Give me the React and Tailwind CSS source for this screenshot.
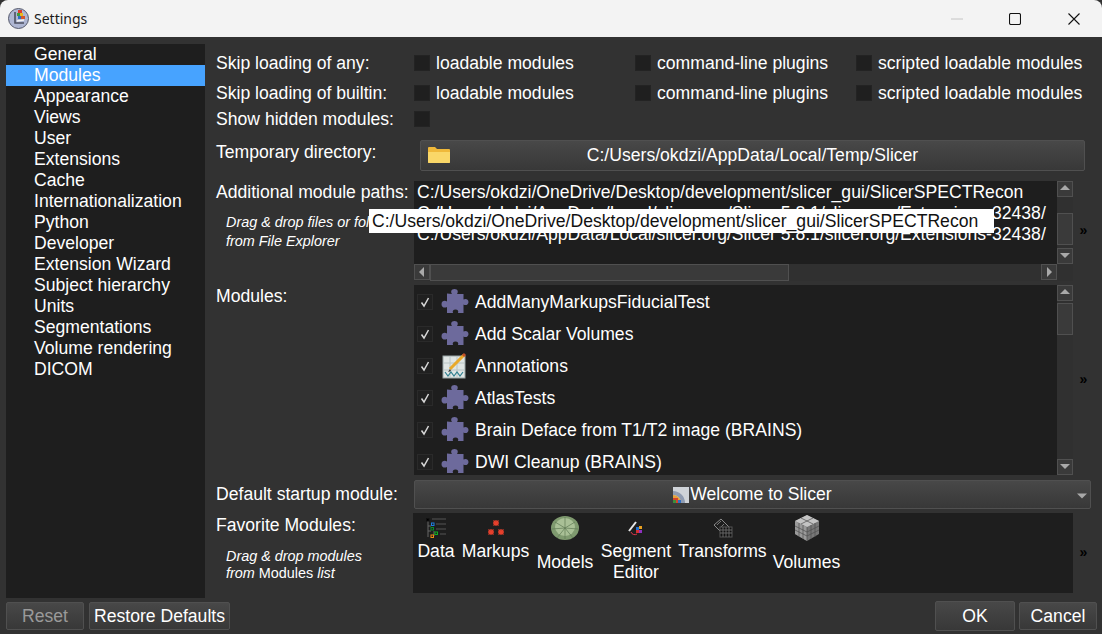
const categories = [
  "General",
  "Modules",
  "Appearance",
  "Views",
  "User",
  "Extensions",
  "Cache",
  "Internationalization",
  "Python",
  "Developer",
  "Extension Wizard",
  "Subject hierarchy",
  "Units",
  "Segmentations",
  "Volume rendering",
  "DICOM",
];

const modules = [
  { name: "AddManyMarkupsFiducialTest" },
  { name: "Add Scalar Volumes" },
  { name: "Annotations", icon: "annotations" },
  { name: "AtlasTests" },
  { name: "Brain Deface from T1/T2 image (BRAINS)" },
  { name: "DWI Cleanup (BRAINS)" },
];

function SlicerLogo() {
  return (
    <svg width="21" height="21" viewBox="0 0 21 21">
      <circle cx="10.5" cy="10.5" r="10" fill="#aeb6d2" stroke="#55596b" strokeWidth="1" />
      <path d="M7 4v11h9" fill="none" stroke="#4d5060" strokeWidth="1.6" />
      <path d="M9 13l7-1" stroke="#f2f2f2" strokeWidth="1.5" />
      <rect x="10" y="2" width="4" height="3" fill="#e03b2a" />
      <rect x="9" y="5" width="3" height="3" fill="#3f9a3c" />
      <rect x="12" y="5" width="3" height="3" fill="#e8b91f" />
      <rect x="10" y="8" width="3" height="3" fill="#2f6fc4" />
      <rect x="13" y="8" width="4" height="3" fill="#d6562b" />
    </svg>
  );
}

function Check() {
  return (
    <div className="flex h-4 w-4 shrink-0 items-center justify-center border border-[#2a2a2a] bg-[#202020]">
      <svg width="12" height="12" viewBox="0 0 12 12">
        <path d="M2.5 6.5l2.5 3.5 4.5-8" fill="none" stroke="#d8d8d8" strokeWidth="1.5" />
      </svg>
    </div>
  );
}

function EmptyBox() {
  return <div className="h-4 w-4 shrink-0 border border-[#232323] bg-[#1f1f1f]" />;
}

function PuzzleIcon() {
  return (
    <svg width="30" height="30" viewBox="0 0 30 30">
      <path
        d="M12 7c-1.5-2-1-5 2.5-5s4 3 2.500 5h6.500v5.500c2-1.200 5-.5 5 2.500s-3 3.800-5 2.500v8.500h-5.500c.8-2-.2-3.500-2.500-3.500s-3.300 1.500-2.500 3.500h-6v-6c-2 1.200-5.500.8-5.500-2.800s3.500-4 5.500-2.800v-7.900z"
        fill="#6d6a9c"
      />
    </svg>
  );
}

function AnnotationsIcon() {
  return (
    <svg width="26" height="28" viewBox="0 0 26 28">
      <rect x="1" y="4" width="22" height="22" fill="#dfe5e4" stroke="#9aa5a5" />
      <path d="M1 11h22M1 18h22M8 4v22M15 4v22" stroke="#b8c4c4" strokeWidth="1" />
      <path d="M3 20l3 4 3-4 3 4 3-4 3 4 3-4" fill="none" stroke="#2f7f8f" strokeWidth="1.2" />
      <path d="M8 17L22 3" stroke="#e8a92a" strokeWidth="3" />
      <path d="M21 4l2-2" stroke="#c2502a" strokeWidth="3" />
      <path d="M8 17l-2 3 3-1z" fill="#333" />
    </svg>
  );
}

function FolderIcon() {
  return (
    <svg width="24" height="19" viewBox="0 0 24 19">
      <path d="M1 3a1 1 0 011-1h6l2 2h12a1 1 0 011 1v12a1 1 0 01-1 1H2a1 1 0 01-1-1z" fill="#f0b93a" />
      <path d="M1 7h22v10a1 1 0 01-1 1H2a1 1 0 01-1-1z" fill="#fad768" />
    </svg>
  );
}

function WelcomeIcon() {
  return (
    <svg width="16" height="16" viewBox="0 0 16 16">
      <rect width="16" height="16" fill="#cfd3d8" />
      <path d="M0 4a12 12 0 0112 12H8a8 8 0 00-8-8z" fill="#8f9bb0" />
      <path d="M0 8a8 8 0 018 8H5a5 5 0 00-5-5z" fill="#e8a23a" />
      <rect x="0" y="11" width="5" height="5" fill="#d6452c" />
      <rect x="0" y="13" width="3" height="3" fill="#3b8f3b" />
      <rect x="5" y="13" width="3" height="3" fill="#2f6fc4" />
    </svg>
  );
}

function DataIcon() {
  return (
    <svg width="20" height="20" viewBox="0 0 20 20" fill="none">
      <path d="M2 3v16M2 8h3M2 13h3M8 13v5" stroke="#666" />
      <path d="M6 1h14M10 6h10M10 11h10M14 16h6" stroke="#555" />
      <rect x="0.500" y="0.500" width="2.500" height="2.500" stroke="#111" strokeWidth="1" fill="#000" />
      <rect x="5.500" y="5" width="2.500" height="2.500" stroke="#1e7fe0" />
      <rect x="5" y="9.500" width="2.500" height="2.500" stroke="#0a8a2a" />
      <rect x="9" y="14" width="2.500" height="2.500" stroke="#0fb01f" />
      <rect x="5" y="17" width="2.500" height="2.500" stroke="#f08a10" />
    </svg>
  );
}

function Asterisk({ x, y }) {
  return (
    <g stroke="#e8402c" strokeWidth="1.300" transform={`translate(${x} ${y})`}>
      <path d="M-3 0h6M0-3v6M-2.500-2.500l5 5M2.500-2.500l-5 5" />
    </g>
  );
}

function MarkupsIcon() {
  return (
    <svg width="20" height="18" viewBox="0 0 20 18">
      <Asterisk x={10} y={4} />
      <Asterisk x={5} y={13} />
      <Asterisk x={15} y={13} />
    </svg>
  );
}

function ModelsIcon() {
  return (
    <svg width="28" height="24" viewBox="0 0 28 24">
      <ellipse cx="14" cy="12" rx="14" ry="12" fill="#7f9a6f" />
      <ellipse cx="14" cy="11" rx="10" ry="9" fill="#a9c096" />
      <path d="M4 6l10 6 10-6M14 1v22M1 13l13-1 13 1M6 22l8-10 8 10" fill="none" stroke="#5f7a55" strokeWidth=".7" />
    </svg>
  );
}

function SegmentIcon() {
  return (
    <svg width="16" height="20" viewBox="0 0 16 20">
      <path d="M1 13L8 4" stroke="#e8e8e8" strokeWidth="2" />
      <path d="M3 14a4 4 0 006 2" fill="none" stroke="#e0344a" strokeWidth="1" />
      <rect x="8" y="9" width="3" height="3" fill="#1f6fd0" />
      <rect x="11" y="8" width="3" height="3" fill="#e8a020" />
      <rect x="8" y="12" width="3" height="3" fill="#d23030" />
      <rect x="11" y="12" width="3" height="3" fill="#9030c0" />
    </svg>
  );
}

function TransformsIcon() {
  return (
    <svg width="20" height="20" viewBox="0 0 20 20">
      <path d="M1 7l7-6 8 8-7 6z" fill="none" stroke="#8a8a8a" />
      <path d="M4 7l4-4M7 10l4-4" stroke="#777" />
      <rect x="7" y="9" width="12" height="10" fill="#111" stroke="#555" />
      <path d="M7 12h12M7 15h12M10 9v10M13 9v10M16 9v10" stroke="#666" />
    </svg>
  );
}

function VolumesIcon() {
  return (
    <svg width="28" height="28" viewBox="0 0 28 28">
      <path d="M14 1l12 6v13l-12 7-12-7V7z" fill="#777" />
      <path d="M14 1l12 6-12 6L2 7z" fill="#c4c4c4" />
      <path d="M2 7l12 6v14L2 20z" fill="#9a9a9a" />
      <path d="M14 13v14M8 4l12 6M20 4L8 10M2 12l12 6 12-6M2 16l12 6 12-6M6 9v14M10 11v14M18 11v14M22 9v14" stroke="#4d4d4d" strokeWidth=".7" fill="none" />
    </svg>
  );
}

function Arrow({ dir }) {
  const paths = {
    up: "M1 7l5-5 5 5z",
    down: "M1 3l5 5 5-5z",
    left: "M8 1L3 6l5 5z",
    right: "M4 1l5 5-5 5z",
  };
  return (
    <svg width="12" height="12" viewBox="0 0 12 12">
      <path d={paths[dir]} fill="#a9a9a9" />
    </svg>
  );
}

function ScrollButton({ dir }) {
  return (
    <div className="flex h-4 w-4 shrink-0 items-center justify-center border border-[#505050] bg-[#3a3a3a]">
      <Arrow dir={dir} />
    </div>
  );
}

function VScrollbar({ thumbTop, thumbHeight }) {
  return (
    <div className="flex w-4 shrink-0 flex-col justify-between bg-[#303030]">
      <ScrollButton dir="up" />
      <div className="flex-1 pt-[var(--t)]" style={{ "--t": `${thumbTop}px` }}>
        <div className="border border-[#505050] bg-[#3a3a3a]" style={{ height: thumbHeight }} />
      </div>
      <ScrollButton dir="down" />
    </div>
  );
}

function Chevron() {
  return <div className="flex w-[20px] shrink-0 items-center justify-center pb-[2px] pl-[1px] text-[14px] font-bold leading-none text-black">»</div>;
}

function GradientButton({ className, children }) {
  return (
    <div className={`flex items-center justify-center rounded-[2px] border border-[#505050] bg-linear-to-b from-[#484848] to-[#383838] ${className}`}>
      {children}
    </div>
  );
}

function SkipRow({ label, className }) {
  return (
    <div className={`flex items-center ${className}`}>
      <div className="w-[198px]">{label}</div>
      {["loadable modules", "command-line plugins", "scripted loadable modules"].map((text) => (
        <div key={text} className="flex w-[221px] items-center gap-[6px] whitespace-nowrap">
          <EmptyBox />
          {text}
        </div>
      ))}
    </div>
  );
}

function FavoriteItem({ icon, width, labelClass, children }) {
  return (
    <div className="flex flex-col items-center text-center leading-[21px]" style={{ width }}>
      <div className="flex h-[24px] items-center justify-center">{icon}</div>
      <div className={labelClass}>{children}</div>
    </div>
  );
}

export default function App() {
  return (
    <div className="relative h-[634px] w-[1102px] overflow-hidden bg-[#323232] font-['Liberation_Sans',Arial,sans-serif] text-[17.6px] text-white">
      <div className="flex h-[37px] items-center rounded-t-[8px] bg-[#f3f3f3] pl-[8px] text-black">
        <SlicerLogo />
        <span className="ml-[5px] font-['Noto_Sans',sans-serif] text-[14px] text-[#1a1a1a]">Settings</span>
        <div className="ml-auto flex items-center">
          <svg width="12" height="12" viewBox="0 0 12 12" className="mr-[46px]">
            <path d="M0 6h12" stroke="#c4c4c4" />
          </svg>
          <svg width="12" height="12" viewBox="0 0 12 12" className="mr-[47px]">
            <rect x=".5" y=".5" width="11" height="11" rx="1.500" fill="none" stroke="#111" strokeWidth="1.100" />
          </svg>
          <svg width="12" height="12" viewBox="0 0 12 12" className="mr-[22px]">
            <path d="M.5.5l11 11M11.500.5l-11 11" stroke="#111" strokeWidth="1.100" />
          </svg>
        </div>
      </div>

      <div className="flex h-[561px]">
        <div className="ml-[6px] mt-[7px] h-[554px] w-[199px] shrink-0 bg-[#1e1e1e]">
          {categories.map((name) => (
            <div
              key={name}
              className={`h-[21px] pl-[28px] leading-[21px] ${name === "Modules" ? "bg-[#47a3ff]" : ""}`}
            >
              {name}
            </div>
          ))}
        </div>

        <div className="flex min-w-0 flex-1 flex-col pl-[11px] pt-[11px]">
          <SkipRow label="Skip loading of any:" className="h-[30px]" />
          <SkipRow label="Skip loading of builtin:" className="h-[30px]" />
          <div className="flex h-[22px] items-center">
            <div className="w-[198px]">Show hidden modules:</div>
            <EmptyBox />
          </div>

          <div className="mt-[10px] flex h-[31px]">
            <div className="w-[198px] leading-[24px]">Temporary directory:</div>
            <GradientButton className="relative ml-[6px] w-[665px]">
              <span className="absolute left-[6px] top-[4px]">
                <FolderIcon />
              </span>
              C:/Users/okdzi/AppData/Local/Temp/Slicer
            </GradientButton>
          </div>

          <div className="mt-[10px] flex h-[100px]">
            <div className="w-[198px] shrink-0">
              <div className="leading-[22px]">Additional module paths:</div>
              <div className="mt-[10px] whitespace-nowrap pl-[10px] text-[14.4px] italic leading-[19px]">
                Drag &amp; drop files or folders
                <br />
                from File Explorer
              </div>
            </div>
            <div className="flex w-[659px] shrink-0 flex-col bg-[#1e1e1e]">
              <div className="flex min-h-0 flex-1">
                <div className="min-w-0 flex-1 overflow-hidden whitespace-nowrap pl-[3px] pt-[1px] leading-[21px]">
                  <div>C:/Users/okdzi/OneDrive/Desktop/development/slicer_gui/SlicerSPECTRecon</div>
                  <div>C:/Users/okdzi/AppData/Local/slicer.org/Slicer 5.8.1/slicer.org/Extensions-32438/</div>
                  <div>C:/Users/okdzi/AppData/Local/slicer.org/Slicer 5.8.1/slicer.org/Extensions-32438/</div>
                </div>
                <VScrollbar thumbTop={16} thumbHeight={32} />
              </div>
              <div className="flex h-[17px] shrink-0 bg-[#303030]">
                <ScrollButton dir="left" />
                <div className="h-[17px] w-[359px] border border-[#505050] bg-[#3a3a3a]" />
                <div className="flex-1" />
                <ScrollButton dir="right" />
                <div className="w-4" />
              </div>
            </div>
            <Chevron />
          </div>

          <div className="mt-[4px] flex h-[190px]">
            <div className="w-[198px] shrink-0 leading-[22px]">Modules:</div>
            <div className="flex w-[659px] shrink-0 bg-[#1e1e1e]">
              <div className="min-w-0 flex-1 overflow-hidden pt-px">
                {modules.map((mod) => (
                  <div key={mod.name} className="flex h-[32px] items-center whitespace-nowrap pl-[3px]">
                    <Check />
                    <div className="ml-[7px] flex w-[30px] justify-center">
                      {mod.icon === "annotations" ? <AnnotationsIcon /> : <PuzzleIcon />}
                    </div>
                    <span className="ml-[5px]">{mod.name}</span>
                  </div>
                ))}
              </div>
              <VScrollbar thumbTop={2} thumbHeight={32} />
            </div>
            <Chevron />
          </div>

          <div className="mt-[5px] flex h-[29px] items-center">
            <div className="w-[198px] shrink-0">Default startup module:</div>
            <GradientButton className="relative h-[29px] w-[677px] shrink-0">
              <WelcomeIcon />
              <span className="ml-px">Welcome to Slicer</span>
              <svg width="12" height="12" viewBox="0 0 12 12" className="absolute right-[2px] top-[9px]">
                <path d="M1 3.500l5 5 5-5z" fill="#a9a9a9" />
              </svg>
            </GradientButton>
          </div>

          <div className="mt-[4px] flex h-[80px]">
            <div className="w-[197px] shrink-0">
              <div className="leading-[24px]">Favorite Modules:</div>
              <div className="mt-[11px] pl-[10px] text-[14.4px] italic leading-[17px]">
                Drag &amp; drop modules
                <br />
                from <span className="not-italic">Modules</span> list
              </div>
            </div>
            <div className="flex w-[660px] shrink-0 gap-[6px] overflow-hidden bg-[#1e1e1e] pl-[4px] pt-[3px]">
              <FavoriteItem icon={<DataIcon />} width={38} labelClass="mt-[1px]">Data</FavoriteItem>
              <FavoriteItem icon={<MarkupsIcon />} width={69} labelClass="mt-[1px]">Markups</FavoriteItem>
              <FavoriteItem icon={<ModelsIcon />} width={58} labelClass="mt-[12px]">Models</FavoriteItem>
              <FavoriteItem icon={<SegmentIcon />} width={72} labelClass="mt-[1px]">Segment Editor</FavoriteItem>
              <FavoriteItem icon={<TransformsIcon />} width={89} labelClass="mt-[1px]">Transforms</FavoriteItem>
              <FavoriteItem icon={<VolumesIcon />} width={67} labelClass="mt-[12px]">Volumes</FavoriteItem>
            </div>
            <Chevron />
          </div>
        </div>
      </div>

      <div className="flex h-[36px] items-center pl-[6px] pr-[5px]">
        <GradientButton className="h-[28px] w-[78px] text-[#9a9a9a]">Reset</GradientButton>
        <GradientButton className="ml-[5px] h-[28px] w-[141px]">Restore Defaults</GradientButton>
        <GradientButton className="ml-auto h-[30px] w-[80px] border-[#5aa0e0] from-[#4a5260] to-[#434a56]">OK</GradientButton>
        <GradientButton className="ml-[4px] h-[28px] w-[78px]">Cancel</GradientButton>
      </div>

      <div className="absolute left-[369px] top-[209px] h-[24px] w-[625px] whitespace-nowrap bg-white pl-[3px] leading-[24px] text-[#111]">
        C:/Users/okdzi/OneDrive/Desktop/development/slicer_gui/SlicerSPECTRecon
      </div>
    </div>
  );
}
